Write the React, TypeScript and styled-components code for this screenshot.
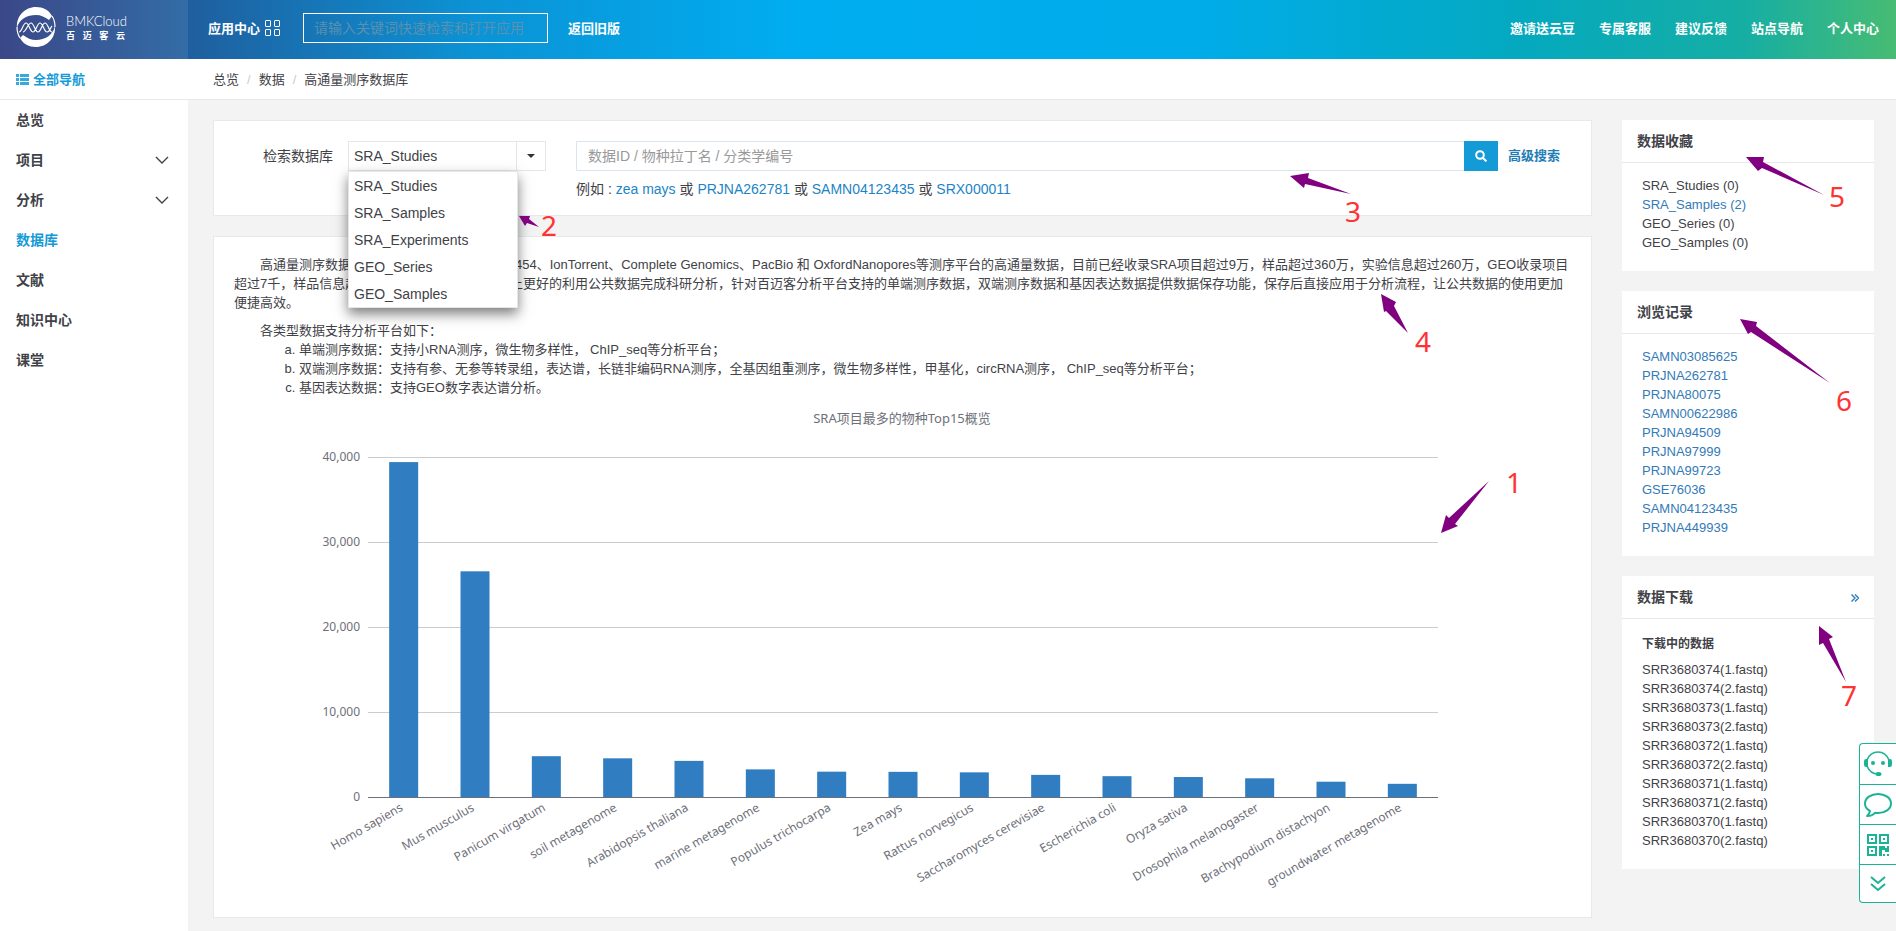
import React from "react";
import styled, { createGlobalStyle } from "styled-components";

const GlobalStyle = createGlobalStyle`
  *, *::before, *::after { box-sizing: border-box; }
  body {
    margin: 0;
    background: #f3f3f4;
    color: #3f4247;
    font-family: "Liberation Sans", Arial, "Noto Sans CJK SC", sans-serif;
    font-size: 13px;
    line-height: 19px;
  }
  a { color: inherit; text-decoration: none; }
  ul, ol, p, h2, h3, figure { margin: 0; padding: 0; }
  ul { list-style: none; }
  button, input, select { font: inherit; color: inherit; }
`;

const Page = styled.div`
  position: relative;
  min-height: 100vh;
  display: flex;
  flex-direction: column;
`;

/* ---------- header ---------- */

const Header = styled.header`
  height: 59px;
  display: flex;
  align-items: stretch;
  color: #fff;
  font-weight: bold;
  background: linear-gradient(
    90deg,
    #28367c 0%,
    #1f5f9f 10%,
    #0b93d5 25%,
    #00adf0 42%,
    #00ace9 63%,
    #04a9c0 80%,
    #16aea4 92%,
    #47bc73 100%
  );
`;

const Brand = styled.a`
  width: 188px;
  padding: 0 16px 12px;
  display: flex;
  align-items: flex-end;
  gap: 10px;
  background: rgba(255, 255, 255, 0.09);
`;

const BrandText = styled.span`
  width: 59px;
  height: 40px;
  padding-top: 6px;
  display: flex;
  flex-direction: column;
`;

const BrandName = styled.span`
  font-family: Lato, sans-serif;
  font-weight: 300;
  font-size: 13px;
  line-height: 17px;
`;

const BrandSub = styled.span`
  display: flex;
  justify-content: space-between;
  font-size: 9px;
  line-height: 12px;
`;

const HeaderLeft = styled.div`
  flex: 1;
  display: flex;
  align-items: center;
  padding: 0 20px 3px;
`;

const AppCenter = styled.a`
  display: flex;
  align-items: center;
  gap: 4px;
  margin-right: 22px;
`;

const AppSearch = styled.input`
  width: 245px;
  height: 30px;
  margin-right: 20px;
  padding: 0 10px;
  border: 1px solid #fff;
  background: transparent;
  font-size: 14px;
  font-weight: normal;
  outline: none;
  &::placeholder { color: #5a90b0; opacity: 1; }
`;

const HeaderNav = styled.nav`
  display: flex;
  align-items: center;
  gap: 24px;
  padding: 0 17px 3px;
`;

/* ---------- breadcrumb bar ---------- */

const SubBar = styled.div`
  height: 41px;
  display: flex;
  align-items: center;
  background: #fff;
  border-bottom: 1px solid #e7eaec;
`;

const AllNav = styled.a`
  width: 188px;
  padding-left: 16px;
  display: flex;
  align-items: center;
  gap: 4px;
  color: #149bd7;
  font-weight: bold;
`;

const Crumbs = styled.nav`
  display: flex;
  padding-left: 25px;
  span { color: #ccc; padding: 0 8px; }
`;

/* ---------- body ---------- */

const Body = styled.div`
  flex: 1;
  display: flex;
`;

const Sidebar = styled.nav`
  width: 188px;
  background: #fff;
`;

const NavItem = styled.a<{ $active?: boolean }>`
  height: 40px;
  padding: 0 19px 0 16px;
  display: flex;
  align-items: center;
  justify-content: space-between;
  font-size: 14px;
  font-weight: bold;
  color: ${(p) => (p.$active ? "#149bd7" : "#3f4247")};
`;

const Content = styled.div`
  flex: 1;
  min-width: 0;
  display: flex;
  gap: 30px;
  padding: 20px 22px 13px 25px;
`;

const Main = styled.main`
  flex: 1;
  min-width: 0;
  display: flex;
  flex-direction: column;
  gap: 20px;
`;

const Panel = styled.section`
  background: #fff;
  border: 1px solid #e7eaec;
`;

const SearchPanel = styled(Panel)`
  position: relative;
  padding: 20px 31px 16px 49px;
  display: grid;
  grid-template-columns: auto 198px 1fr auto;
  align-items: center;
  row-gap: 8px;
  font-size: 14px;
  line-height: 20px;
`;

const FieldLabel = styled.label`
  padding-right: 15px;
`;

const SelectWrap = styled.div`
  position: relative;
  display: flex;
  height: 30px;
  border: 1px solid #e5e6e7;
`;

const Select = styled.select`
  flex: 1;
  padding: 0 5px;
  border: 0;
  background: transparent;
  appearance: none;
  outline: none;
`;

const SelectArrow = styled.span`
  position: absolute;
  top: 0;
  right: 0;
  width: 29px;
  height: 28px;
  border-left: 1px solid #e5e6e7;
  display: flex;
  align-items: center;
  justify-content: center;
  pointer-events: none;
`;

const Options = styled.ul`
  position: absolute;
  z-index: 2;
  top: 29px;
  left: -1px;
  width: 170px;
  background: #fff;
  border: 1px solid #e5e6e7;
  box-shadow: 0 6px 12px rgba(0, 0, 0, 0.5);
`;

const Option = styled.li`
  height: 27px;
  padding: 0 5px;
  display: flex;
  align-items: center;
`;

const SearchBox = styled.div`
  display: flex;
  height: 30px;
  margin: 0 10px 0 30px;
`;

const SearchInput = styled.input`
  flex: 1;
  padding: 0 11px;
  border: 1px solid #dbe4ef;
  border-right: 0;
  outline: none;
  &::placeholder { color: #999; opacity: 1; }
`;

const SearchButton = styled.button`
  width: 34px;
  padding: 0;
  border: 0;
  background: #149bd7;
  color: #fff;
  display: flex;
  align-items: center;
  justify-content: center;
`;

const Advanced = styled.a`
  color: #1f7db5;
  font-size: 13px;
  font-weight: bold;
`;

const Examples = styled.p`
  grid-column: 3;
  padding-left: 30px;
  a { color: #1c84c6; }
`;

const OverviewPanel = styled(Panel)`
  padding: 18px 20px 20px;
`;

const Para = styled.p`
  text-indent: 26px;
  & + & { margin-top: 9px; }
`;

const TypeList = styled.ol`
  list-style: lower-alpha;
  padding-left: 65px;
`;

const ChartSvg = styled.svg`
  display: block;
  width: 100%;
  height: auto;
  font-family: "Noto Sans", "Noto Sans CJK SC", sans-serif;
  font-size: 12px;
  fill: #6e7079;
`;

/* ---------- right column ---------- */

const Aside = styled.aside`
  width: 252px;
  display: flex;
  flex-direction: column;
  gap: 20px;
`;

const Card = styled.section`
  background: #fff;
`;

const CardHead = styled.h2`
  height: 43px;
  padding: 0 15px;
  display: flex;
  align-items: center;
  justify-content: space-between;
  border-bottom: 1px solid #e7eaec;
  font-size: 14px;
  font-weight: bold;
`;

const CardBody = styled.div`
  padding: 13px 20px 19px;
`;

const CardTitle = styled.h3`
  padding: 3px 0 6px;
  font-size: 12px;
  font-weight: bold;
`;

const RecordLink = styled.a<{ $link?: boolean }>`
  color: ${(p) => (p.$link ? "#337ab7" : "inherit")};
`;

/* ---------- overlays ---------- */

const FloatBar = styled.div`
  position: fixed;
  right: 0;
  bottom: 28px;
  z-index: 3;
  width: 37px;
  background: #fff;
  border: 1px solid #1ab394;
  border-right: 0;
  border-radius: 4px 0 0 4px;
`;

const FloatButton = styled.button`
  width: 100%;
  height: 40px;
  padding: 0;
  border: 0;
  background: transparent;
  color: #1ab394;
  display: flex;
  align-items: center;
  justify-content: center;
  & + & { border-top: 1px solid #1ab394; }
  &:last-child { height: 38px; }
`;

const Callout = styled.svg<{ $top: number; $left?: number; $right?: number }>`
  position: absolute;
  z-index: 4;
  top: ${(p) => p.$top}px;
  ${(p) => (p.$left !== undefined ? `left: ${p.$left}px;` : `right: ${p.$right}px;`)}
  pointer-events: none;
  font-family: "Noto Sans", sans-serif;
  font-size: 28px;
`;

/* ---------- icons ---------- */

const LogoMark = () => (
  <svg width="40" height="40" viewBox="0 0 40 40" fill="#fff" aria-hidden="true">
    <path d="M1 21C0 9 9 0 20 0c7 0 13 3 16 9l-3 4C29 10 25 8 20 8 11 8 3 12 1 21z" />
    <path d="M39 19c1 12-8 21-19 21-7 0-13-3-16-9l3-3c4 3 8 5 13 5 9 0 17-5 19-14z" />
    <path d="M1 20c0 4 1 8 3 11M39 20c0-4-1-8-3-11" fill="none" stroke="#fff" strokeWidth="1.2" />
    <path
      d="M3 25c3 0 4-9 7-9s4 9 7 9 4-9 7-9 4 9 7 9 3-4 5-6M7 25c3 0 5-9 8-9s4 9 7 9 4-9 7-9 4 9 7 9"
      fill="none"
      stroke="#fff"
      strokeWidth="1.2"
    />
  </svg>
);

const GridIcon = () => (
  <svg width="17" height="17" viewBox="0 0 17 17" fill="none" stroke="#fff" aria-hidden="true">
    <rect x="1.5" y="0.5" width="5" height="6" rx="0.5" />
    <rect x="10.5" y="0.5" width="5" height="6" rx="0.5" />
    <rect x="1.5" y="9.5" width="5" height="6" rx="0.5" />
    <rect x="10.5" y="9.5" width="5" height="6" rx="0.5" />
  </svg>
);

const ListIcon = () => (
  <svg width="13" height="11" viewBox="0 0 13 11" fill="currentColor" aria-hidden="true">
    <path d="M0 0h3v3H0zM4 0h9v3H4zM0 4h3v3H0zM4 4h9v3H4zM0 8h3v3H0zM4 8h9v3H4z" fillOpacity="0.85" />
  </svg>
);

const ChevronIcon = () => (
  <svg width="14" height="8" viewBox="0 0 14 8" fill="none" stroke="#3f4247" strokeWidth="1.4" aria-hidden="true">
    <path d="M1 1l6 6 6-6" />
  </svg>
);

const SearchIcon = () => (
  <svg width="12" height="12" viewBox="0 0 12 12" fill="none" stroke="#fff" strokeWidth="2" aria-hidden="true">
    <circle cx="5" cy="5" r="3.8" />
    <path d="M8 8l3.4 3.4" />
  </svg>
);

const HeadsetIcon = () => (
  <svg width="28" height="26" viewBox="0 0 28 26" fill="none" stroke="currentColor" strokeWidth="1.6" aria-hidden="true">
    <path d="M3 9C5 4 9 1 14 1s9 3 11 8M3 15c2 5 6 8 11 8" />
    <path d="M4 8H2a2 3 0 0 0-2 3v2a2 3 0 0 0 2 3h2V8zM24 8h2a2 3 0 0 1 2 3v2a2 3 0 0 1-2 3h-2V8z" fill="currentColor" stroke="none" />
    <circle cx="9" cy="12" r="2" fill="currentColor" stroke="none" />
    <circle cx="19" cy="12" r="2" fill="currentColor" stroke="none" />
    <ellipse cx="14.5" cy="23" rx="3" ry="2" fill="currentColor" stroke="none" />
  </svg>
);

const ChatIcon = () => (
  <svg width="28" height="24" viewBox="0 0 28 24" fill="none" stroke="currentColor" strokeWidth="2" strokeLinejoin="round" aria-hidden="true">
    <path d="M14 1C7 1 1 5 1 10.5c0 3 2 6 5 7.5-.5 2-1.5 4-3 5 3 0 6-1 8-3.2 1 .2 2 .2 3 .2 7 0 13-4 13-9.5S21 1 14 1z" />
  </svg>
);

const QrIcon = () => (
  <svg width="22" height="22" viewBox="0 0 22 22" fill="currentColor" fillRule="evenodd" aria-hidden="true">
    <path d="M0 0h10v10H0zM2 2v6h6V2zM4 4h2v2H4zM12 0h10v10H12zM14 2v6h6V2zM16 4h2v2h-2zM0 12h10v10H0zM2 14v6h6v-6zM4 16h2v2H4zM12 12h6v2h2v-2h2v6h-4v-2h-3v6h-3zM16 20h2v2h-2zM20 20h2v2h-2z" />
  </svg>
);

const DoubleDownIcon = () => (
  <svg width="18" height="16" viewBox="0 0 18 16" fill="none" stroke="currentColor" strokeWidth="2" aria-hidden="true">
    <path d="M2 1l7 6 7-6M2 8l7 6 7-6" />
  </svg>
);

/* ---------- data ---------- */

const databases = ["SRA_Studies", "SRA_Samples", "SRA_Experiments", "GEO_Series", "GEO_Samples"];

const navItems = [
  { label: "总览" },
  { label: "项目", expandable: true },
  { label: "分析", expandable: true },
  { label: "数据库", active: true },
  { label: "文献" },
  { label: "知识中心" },
  { label: "课堂" },
];

const favorites = [
  { name: "SRA_Studies", count: 0 },
  { name: "SRA_Samples", count: 2 },
  { name: "GEO_Series", count: 0 },
  { name: "GEO_Samples", count: 0 },
];

const history = [
  "SAMN03085625", "PRJNA262781", "PRJNA80075", "SAMN00622986", "PRJNA94509",
  "PRJNA97999", "PRJNA99723", "GSE76036", "SAMN04123435", "PRJNA449939",
];

const downloads = ["SRR3680374", "SRR3680373", "SRR3680372", "SRR3680371", "SRR3680370"].flatMap((run) => [
  `${run}(1.fastq)`,
  `${run}(2.fastq)`,
]);

const species: [string, number][] = [
  ["Homo sapiens", 39400],
  ["Mus musculus", 26550],
  ["Panicum virgatum", 4800],
  ["soil metagenome", 4550],
  ["Arabidopsis thaliana", 4250],
  ["marine metagenome", 3250],
  ["Populus trichocarpa", 2980],
  ["Zea mays", 2960],
  ["Rattus norvegicus", 2900],
  ["Saccharomyces cerevisiae", 2600],
  ["Escherichia coli", 2450],
  ["Oryza sativa", 2350],
  ["Drosophila melanogaster", 2200],
  ["Brachypodium distachyon", 1800],
  ["groundwater metagenome", 1550],
];

const callouts = [
  { n: "2", x: 515, y: 195, w: 55, h: 60, left: true, tx: 541, ty: 236, points: "519,216 530,216 529,219 539,227 527,223 525,226" },
  { n: "3", x: 1280, y: 170, w: 90, h: 70, tx: 1345, ty: 222, points: "1290,176 1309,173 1308,178 1351,194 1305,184 1304,188" },
  { n: "4", x: 1375, y: 290, w: 65, h: 75, tx: 1415, ty: 352, points: "1381,294 1396,302 1394,306 1408,333 1386,311 1384,312" },
  { n: "5", x: 1740, y: 150, w: 115, h: 70, tx: 1829, ty: 207, points: "1746,157 1764,157 1763,162 1824,195 1762,168 1758,171" },
  { n: "6", x: 1735, y: 315, w: 125, h: 110, tx: 1836, ty: 411, points: "1740,319 1757,322 1756,326 1830,383 1751,332 1748,334" },
  { n: "7", x: 1815, y: 620, w: 55, h: 100, tx: 1841, ty: 706, points: "1819,626 1833,637 1829,639 1846,682 1823,643 1819,645" },
  { n: "1", x: 1435, y: 450, w: 95, h: 90, tx: 1506, ty: 493, points: "1441,533 1446,515 1449,518 1489,481 1455,524 1458,526" },
];

/* ---------- chart ---------- */

const PLOT = { left: 134, right: 1204, top: 60, bottom: 400, max: 40000 };

const SpeciesChart = () => {
  const step = (PLOT.right - PLOT.left) / species.length;
  const yOf = (v: number) => PLOT.bottom - (v / PLOT.max) * (PLOT.bottom - PLOT.top);
  return (
    <ChartSvg viewBox="0 0 1337 500" role="img" aria-label="SRA项目最多的物种Top15概览">
      <text x="668" y="26" textAnchor="middle" fontSize="13">SRA项目最多的物种Top15概览</text>
      {[0, 10000, 20000, 30000, 40000].map((v) => (
        <g key={v}>
          <rect x={PLOT.left} y={yOf(v)} width={PLOT.right - PLOT.left} height="1" fill="#ccc" />
          <text x="126" y={yOf(v) + 4} textAnchor="end">{v.toLocaleString("en-US")}</text>
        </g>
      ))}
      {species.map(([name, v], i) => {
        const cx = PLOT.left + step * (i + 0.5);
        return (
          <g key={name}>
            <rect x={cx - 14.5} y={yOf(v)} width="29" height={PLOT.bottom - yOf(v)} fill="#317dc1" />
            <text transform={`translate(${cx} ${PLOT.bottom + 13}) rotate(-30)`} textAnchor="end">{name}</text>
          </g>
        );
      })}
      <rect x={PLOT.left} y={PLOT.bottom} width={PLOT.right - PLOT.left} height="1" fill="#6e7079" />
    </ChartSvg>
  );
};

/* ---------- page ---------- */

export default function App() {
  return (
    <Page>
      <GlobalStyle />
      <Header>
        <Brand href="#">
          <LogoMark />
          <BrandText>
            <BrandName>BMKCloud</BrandName>
            <BrandSub>
              {["百", "迈", "客", "云"].map((c) => <span key={c}>{c}</span>)}
            </BrandSub>
          </BrandText>
        </Brand>
        <HeaderLeft>
          <AppCenter href="#">应用中心<GridIcon /></AppCenter>
          <AppSearch aria-label="搜索应用" placeholder="请输入关键词快速检索和打开应用" />
          <a href="#">返回旧版</a>
        </HeaderLeft>
        <HeaderNav>
          {["邀请送云豆", "专属客服", "建议反馈", "站点导航", "个人中心"].map((t) => (
            <a key={t} href="#">{t}</a>
          ))}
        </HeaderNav>
      </Header>

      <SubBar>
        <AllNav href="#"><ListIcon />全部导航</AllNav>
        <Crumbs>
          <a href="#">总览</a><span>/</span>
          <a href="#">数据</a><span>/</span>
          <a href="#">高通量测序数据库</a>
        </Crumbs>
      </SubBar>

      <Body>
        <Sidebar>
          {navItems.map((item) => (
            <NavItem key={item.label} href="#" $active={item.active}>
              {item.label}
              {item.expandable && <ChevronIcon />}
            </NavItem>
          ))}
        </Sidebar>

        <Content>
          <Main>
            <SearchPanel>
              <FieldLabel htmlFor="database">检索数据库</FieldLabel>
              <SelectWrap>
                <Select id="database" defaultValue="SRA_Studies">
                  {databases.map((d) => <option key={d}>{d}</option>)}
                </Select>
                <SelectArrow>
                  <svg width="8" height="4" viewBox="0 0 8 4" fill="#333"><path d="M0 0h8L4 4z" /></svg>
                </SelectArrow>
                <Options role="listbox">
                  {databases.map((d) => <Option key={d} role="option">{d}</Option>)}
                </Options>
              </SelectWrap>
              <SearchBox>
                <SearchInput aria-label="检索" placeholder="数据ID / 物种拉丁名 / 分类学编号" />
                <SearchButton aria-label="搜索"><SearchIcon /></SearchButton>
              </SearchBox>
              <Advanced href="#">高级搜索</Advanced>
              <Examples>
                例如 : <a href="#">zea mays</a> 或 <a href="#">PRJNA262781</a> 或{" "}
                <a href="#">SAMN04123435</a> 或 <a href="#">SRX000011</a>
              </Examples>
            </SearchPanel>

            <OverviewPanel>
              <Para>
                高通量测序数据库中整合了Illumina、Roche 454、IonTorrent、Complete Genomics、PacBio 和
                OxfordNanopores等测序平台的高通量数据，目前已经收录SRA项目超过9万，样品超过360万，实验信息超过260万，GEO收录项目超过7千，样品信息超过120万。为了能在云平台上更好的利用公共数据完成科研分析，针对百迈客分析平台支持的单端测序数据，双端测序数据和基因表达数据提供数据保存功能，保存后直接应用于分析流程，让公共数据的使用更加便捷高效。
              </Para>
              <Para>各类型数据支持分析平台如下：</Para>
              <TypeList>
                <li>单端测序数据：支持小RNA测序，微生物多样性， ChIP_seq等分析平台；</li>
                <li>双端测序数据：支持有参、无参等转录组，表达谱，长链非编码RNA测序，全基因组重测序，微生物多样性，甲基化，circRNA测序， ChIP_seq等分析平台；</li>
                <li>基因表达数据：支持GEO数字表达谱分析。</li>
              </TypeList>
              <SpeciesChart />
            </OverviewPanel>
          </Main>

          <Aside>
            <Card>
              <CardHead>数据收藏</CardHead>
              <CardBody>
                <ul>
                  {favorites.map((f) => (
                    <li key={f.name}>
                      <RecordLink href="#" $link={f.count > 0}>{f.name} ({f.count})</RecordLink>
                    </li>
                  ))}
                </ul>
              </CardBody>
            </Card>
            <Card>
              <CardHead>浏览记录</CardHead>
              <CardBody>
                <ul>
                  {history.map((h) => (
                    <li key={h}><RecordLink href="#" $link>{h}</RecordLink></li>
                  ))}
                </ul>
              </CardBody>
            </Card>
            <Card>
              <CardHead>
                数据下载
                <RecordLink href="#" $link aria-label="更多">
                  <svg width="8" height="8" viewBox="0 0 8 8" fill="none" stroke="currentColor" strokeWidth="1.4">
                    <path d="M0.5 0.5L4 4 0.5 7.5M4 0.5L7.5 4 4 7.5" />
                  </svg>
                </RecordLink>
              </CardHead>
              <CardBody>
                <CardTitle>下载中的数据</CardTitle>
                <ul>
                  {downloads.map((d) => <li key={d}>{d}</li>)}
                </ul>
              </CardBody>
            </Card>
          </Aside>
        </Content>
      </Body>

      {callouts.map((c) => (
        <Callout
          key={c.n}
          width={c.w}
          height={c.h}
          viewBox={`${c.x} ${c.y} ${c.w} ${c.h}`}
          $top={c.y}
          $left={c.left ? c.x : undefined}
          $right={1896 - c.x - c.w}
        >
          <polygon points={c.points} fill="#800080" />
          <text x={c.tx} y={c.ty} fill="#ff3333">{c.n}</text>
        </Callout>
      ))}

      <FloatBar>
        <FloatButton aria-label="在线客服"><HeadsetIcon /></FloatButton>
        <FloatButton aria-label="留言"><ChatIcon /></FloatButton>
        <FloatButton aria-label="二维码"><QrIcon /></FloatButton>
        <FloatButton aria-label="收起"><DoubleDownIcon /></FloatButton>
      </FloatBar>
    </Page>
  );
}
